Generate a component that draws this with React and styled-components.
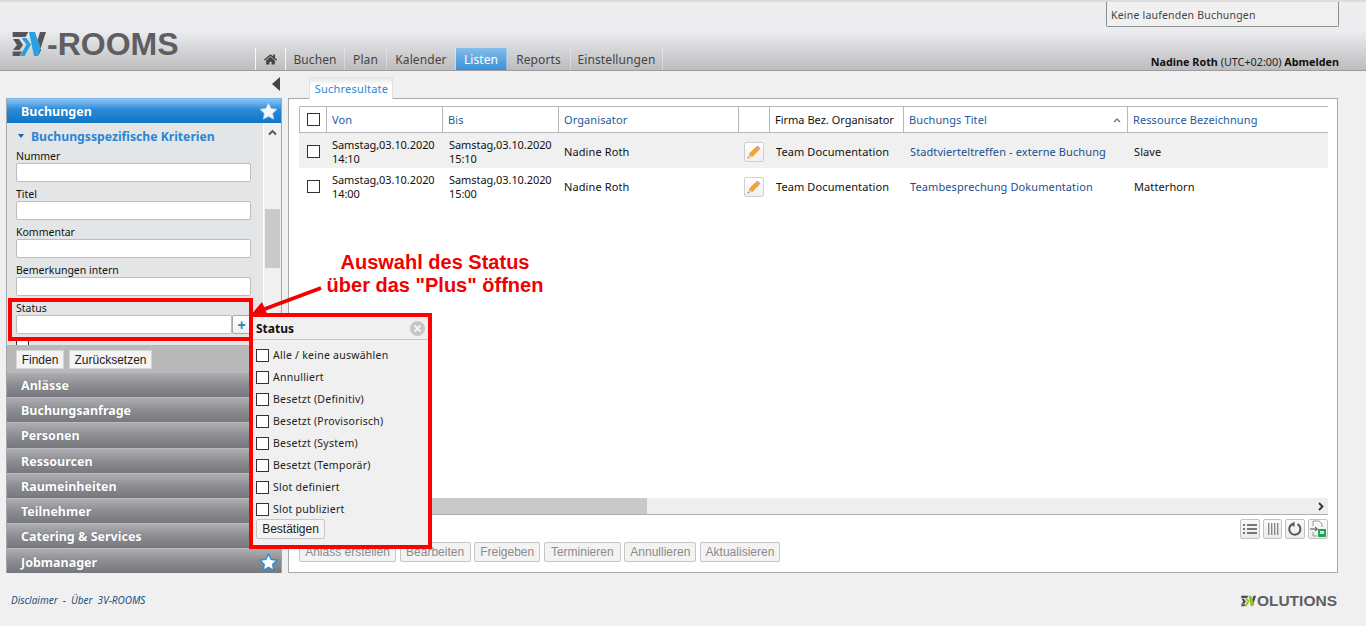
import React from 'react';
import styled, { createGlobalStyle } from 'styled-components';
import { FaHome } from 'react-icons/fa';

const UI_FONT = '"Noto Sans", "Open Sans", sans-serif';
const ARIAL = '"Liberation Sans", Arial, sans-serif';

const Global = createGlobalStyle`
  html, body { margin: 0; padding: 0; background: #f0f0f0; }
  body { font-family: ${UI_FONT}; font-size: 11px; color: #111; }
  * { box-sizing: border-box; }
`;

const Page = styled.div`
  position: relative;
  width: 1366px;
  height: 626px;
  overflow: hidden;
  display: flex;
  flex-direction: column;
`;

/* kopfzeile */
const Header = styled.header`
  height: 71px;
  flex: none;
  display: flex;
  flex-direction: column;
  border-top: 2px solid #dcdcdc;
  border-bottom: 1px solid #9b9ba0;
  background: linear-gradient(to bottom, #eeeef0 0%, #ecedef 42%, #bcbcbf 100%);
`;

const HeaderTop = styled.div`
  height: 25px;
  flex: none;
  display: flex;
  justify-content: flex-end;
  padding-right: 27px;
`;

const RunningBox = styled.div`
  width: 233px;
  height: 25px;
  padding: 6px 0 0 4px;
  background: #f0f0f0;
  border: 1px solid #8f8f8f;
  border-top: 0;
  border-radius: 0 0 2px 2px;
  color: #444;
  font-size: 10.5px;
  letter-spacing: 0.2px;
`;

const HeaderBottom = styled.div`
  flex: 1;
  display: flex;
  align-items: flex-end;
  padding-right: 27px;
`;

const LogoWrap = styled.div`
  width: 255px;
  flex: none;
  align-self: flex-start;
  display: flex;
  align-items: center;
  padding: 1px 0 0 12px;
`;

const LogoText = styled.span`
  font-family: ${ARIAL};
  font-weight: 700;
  font-size: ${p => p.$size}px;
  line-height: 1;
  color: #5e5e63;
  letter-spacing: ${p => p.$spacing || 0}px;
`;

const Nav = styled.nav`
  display: flex;
  height: 22px;
  border-left: 1px solid #f6f6f6;
`;

const NavItem = styled.div`
  width: ${p => p.$w}px;
  display: flex;
  align-items: center;
  justify-content: center;
  font-size: 12px;
  letter-spacing: 0.1px;
  color: ${p => (p.$active ? '#fff' : '#454545')};
  background: ${p => (p.$active ? 'linear-gradient(to bottom, #84bde9, #3a90d8)' : 'transparent')};
  border-right: 1px solid ${p => (p.$white ? '#f6f6f6' : 'rgba(255,255,255,0.35)')};
`;

const UserInfo = styled.div`
  margin-left: auto;
  padding-bottom: 1px;
  font-size: 10.8px;
  color: #222;
  b { color: #111; }
`;

/* inhalt */
const Content = styled.div`
  flex: none;
  display: grid;
  grid-template-columns: 276px 1050px;
  column-gap: 6px;
  padding-left: 6px;
`;

const SideColumn = styled.div`
  display: flex;
  flex-direction: column;
`;

const CollapseRow = styled.div`
  height: 27px;
  display: flex;
  justify-content: flex-end;
  padding: 6px 2px 0 0;
`;

const Sidebar = styled.aside`
  height: 475px;
  border: 1px solid #a6a6a9;
  border-top: 0;
  display: flex;
  flex-direction: column;
  background: #e4e5e7;
`;

const AccordionHead = styled.div`
  height: ${p => p.$h || 25}px;
  flex: none;
  display: flex;
  align-items: center;
  justify-content: space-between;
  padding: ${p => (p.$low ? 2 : 0)}px 3px 0 14px;
  color: #fff;
  font-size: 12.5px;
  font-weight: 700;
  text-shadow: 0 0 1px rgba(0, 0, 0, 0.25);
  border-top: 1px solid ${p => (p.$blue ? '#7ab6ec' : '#b9babd')};
  background: ${p =>
    p.$blue
      ? 'linear-gradient(to bottom, #8cc4f3 0%, #2a8ad9 45%, #0f76c6 100%)'
      : 'linear-gradient(to bottom, #aeaeb2 0%, #8c8d92 50%, #77787e 100%)'};
`;

const SectionBody = styled.div`
  height: 222px;
  flex: none;
  display: flex;
  overflow: hidden;
`;

const FormArea = styled.div`
  flex: 1;
  padding: 0 0 0 9px;
`;

const SectionTitle = styled.div`
  height: 21px;
  padding-top: 5px;
  display: flex;
  align-items: center;
  gap: 7px;
  margin-left: 2px;
  color: #2a86d6;
  font-size: 12.2px;
  font-weight: 700;
`;

const Caret = styled.span`
  width: 0;
  height: 0;
  border-left: 3.5px solid transparent;
  border-right: 3.5px solid transparent;
  border-top: 4px solid #1668b4;
`;

const FieldLabel = styled.div`
  height: 19px;
  padding-top: 6px;
  font-size: 10.5px;
  line-height: 13px;
  color: #111;
`;

const InputRow = styled.div`
  display: flex;
  width: 235px;
  height: 19px;
`;

const TextField = styled.div`
  flex: 1;
  background: #fff;
  border: 1px solid #bdbdbd;
  border-radius: 2px;
`;

const PlusButton = styled.div`
  width: 19px;
  height: 19px;
  display: flex;
  align-items: center;
  justify-content: center;
  background: linear-gradient(to bottom, #fff, #efefef);
  border: 1px solid #a8a8a8;
  border-radius: 2px;
  color: #2f7dbd;
  font-family: ${ARIAL};
  font-weight: 700;
  font-size: 14px;
`;

const ClippedBox = styled.div`
  width: 13px;
  height: 13px;
  margin-top: 6px;
  background: #fff;
  border: 1px solid #333;
`;

const ScrollRail = styled.div`
  width: 18px;
  flex: none;
  background: #f0f0f0;
  border-left: 1px solid #fff;
  display: flex;
  flex-direction: column;
  align-items: center;
  padding-top: 5px;
  color: #555;
`;

const ScrollThumb = styled.div`
  width: 15px;
  height: 59px;
  margin-top: 72px;
  background: #c9c9c9;
`;

const ButtonBar = styled.div`
  height: 27px;
  flex: none;
  display: flex;
  align-items: flex-start;
  gap: 5px;
  padding: 5px 0 0 9px;
  background: #b9b9b9;
`;

const SmallButton = styled.div`
  height: 19px;
  width: ${p => p.$w}px;
  display: flex;
  align-items: center;
  justify-content: center;
  background: #f4f4f4;
  border: 1px solid #d6d6d6;
  font-family: ${ARIAL};
  font-size: 12px;
  color: #222;
`;

/* hauptbereich */
const MainColumn = styled.div`
  display: flex;
  flex-direction: column;
`;

const TabStrip = styled.div`
  height: 27px;
  display: flex;
  align-items: flex-end;
  padding-left: 21px;
`;

const Tab = styled.div`
  position: relative;
  z-index: 1;
  width: 84px;
  height: 22px;
  margin-bottom: -1px;
  padding-left: 1px;
  display: flex;
  align-items: center;
  justify-content: center;
  color: #2a86d6;
  font-size: 11px;
  letter-spacing: 0.2px;
  background: linear-gradient(to bottom, #e6e6e6, #fff 35%);
  border: 1px solid #e2e2e2;
  border-bottom: 0;
`;

const Panel = styled.section`
  height: 475px;
  display: flex;
  flex-direction: column;
  padding: 7px 9px 10px 10px;
  background: #fff;
  border: 1px solid #a9a9ac;
`;

const TableArea = styled.div`
  flex: 1;
  overflow: hidden;
`;

const Row = styled.div`
  display: grid;
  grid-template-columns: 28px 116px 116px 180px 31px 134px 224px 200px;
  height: ${p => (p.$head ? 27 : 35)}px;
  background: ${p => (p.$shade ? '#f0f0f0' : '#fff')};
  border-top: ${p => (p.$head ? '1px solid #b8b8bc' : '0')};
  border-bottom: ${p => (p.$head ? '1px solid #b8b8bc' : '0')};
`;

const HeadCell = styled.div`
  display: flex;
  align-items: center;
  justify-content: ${p => (p.$center ? 'center' : 'space-between')};
  padding: 0 ${p => (p.$center ? 0 : 6)}px 0 ${p => (p.$center ? 0 : 5)}px;
  border-left: ${p => (p.$first ? '1px solid #b8b8bc' : '0')};
  border-right: ${p => (p.$last ? '0' : '1px solid #b8b8bc')};
  color: ${p => (p.$plain ? '#111' : '#1b5a9a')};
  font-size: 11px;
  letter-spacing: ${p => (p.$plain ? 0 : 0.1)}px;
`;

const Cell = styled.div`
  display: flex;
  align-items: center;
  justify-content: ${p => (p.$center ? 'center' : 'flex-start')};
  padding-top: 2px;
  padding-left: ${p => (p.$center ? 0 : p.$pad || 6)}px;
  color: ${p => (p.$link ? '#1a4f8f' : '#111')};
  font-size: 11px;
  line-height: 14px;
  white-space: pre-line;
  letter-spacing: ${p => (p.$tight ? -0.07 : 0.1)}px;
`;

const Check = styled.span`
  display: block;
  width: 13px;
  height: 13px;
  flex: none;
  background: #fff;
  border: 1px solid #333;
`;

const PencilButton = styled.div`
  width: 20px;
  height: 20px;
  margin-right: 1px;
  display: flex;
  align-items: center;
  justify-content: center;
  background: linear-gradient(to bottom, #fff, #f0f0f0);
  border: 1px solid #cfcfcf;
  border-radius: 2px;
`;

const HScroll = styled.div`
  height: 17px;
  flex: none;
  display: flex;
  align-items: center;
  background: #eeeeee;
  border-bottom: 1px solid #b0b0b3;
`;

const HThumb = styled.div`
  width: 332px;
  height: 16px;
  margin-left: 16px;
  background: #c9c9c9;
`;

const HArrow = styled.div`
  margin-left: auto;
  padding-right: 3px;
  display: flex;
  align-items: center;
  color: #333;
`;

const ToolRow = styled.div`
  height: 20px;
  margin-top: 4px;
  flex: none;
  display: flex;
  justify-content: flex-end;
  gap: 3px;
`;

const ToolButton = styled.div`
  width: ${p => p.$w || 20}px;
  height: 20px;
  display: flex;
  align-items: center;
  justify-content: center;
  background: linear-gradient(to bottom, #fafafa, #ebebeb);
  border: 1px solid #c2c2c2;
  border-radius: 2px;
`;

const ActionRow = styled.div`
  height: 20px;
  margin-top: 3px;
  flex: none;
  display: flex;
  gap: 3.6px;
`;

const ActionButton = styled.div`
  height: 20px;
  width: ${p => p.$w}px;
  display: flex;
  align-items: center;
  justify-content: center;
  font-family: ${ARIAL};
  font-size: 12px;
  color: #8b8b8b;
  background: #f3f3f3;
  border: 1px solid #c6c6c6;
  border-radius: 2px;
`;

/* fusszeile */
const Footer = styled.footer`
  flex: 1;
  display: flex;
  align-items: center;
  justify-content: space-between;
  padding: 0 29px 0 11px;
`;

const FooterLinks = styled.div`
  font-size: 10px;
  font-style: italic;
  color: #1d4f82;
  word-spacing: 2.5px;
`;

const FooterLogo = styled.div`
  display: flex;
  align-items: center;
  padding-top: 2px;
`;

/* anmerkungen im screenshot, liegen ueber dem inhalt */
const RedFrame = styled.div`
  position: absolute;
  left: 8px;
  top: 298px;
  width: 245px;
  height: 43px;
  border: 4px solid #ff0000;
  pointer-events: none;
`;

const Popup = styled.div`
  position: absolute;
  left: 249px;
  top: 313px;
  width: 183px;
  height: 236px;
  display: flex;
  flex-direction: column;
  background: #f0f0f0;
  border: 4px solid #ff0000;
`;

const PopupHead = styled.div`
  height: 23px;
  flex: none;
  display: flex;
  align-items: center;
  justify-content: space-between;
  padding: 0 3px 0 3px;
  font-size: 12px;
  font-weight: 700;
  color: #111;
  border-bottom: 1px solid #c4c4c4;
`;

const CloseDot = styled.div`
  width: 15px;
  height: 15px;
  display: flex;
  align-items: center;
  justify-content: center;
  border-radius: 50%;
  background: #c6c6c6;
`;

const PopupList = styled.div`
  padding: 4px 0 0 3px;
  display: flex;
  flex-direction: column;
`;

const PopupRow = styled.div`
  height: 22px;
  display: flex;
  align-items: center;
  gap: 4px;
  font-size: 10.5px;
  letter-spacing: 0.25px;
  color: #222;
`;

const ConfirmButton = styled.div`
  width: 69px;
  height: 20px;
  margin: -1px 0 0 3px;
  display: flex;
  align-items: center;
  justify-content: center;
  font-family: ${ARIAL};
  font-size: 12px;
  color: #222;
  background: #f4f4f4;
  border: 1px solid #c6c6c6;
  border-radius: 2px;
`;

const Note = styled.div`
  position: absolute;
  left: 301px;
  top: 251px;
  width: 268px;
  text-align: center;
  font-family: ${ARIAL};
  font-weight: 700;
  font-size: 20px;
  line-height: 23px;
  color: #f00000;
`;

const ArrowSvg = styled.svg`
  position: absolute;
  left: 240px;
  top: 280px;
`;

const Star = ({ blue }) => (
  <svg width="19" height="19" viewBox="0 0 18 18">
    <polygon
      points="9,1 11.47,6.1 17.08,6.87 13,10.8 14,16.38 9,13.7 4,16.38 5,10.8 0.92,6.87 6.53,6.1"
      fill={blue ? '#fff' : '#f4f8fd'}
      stroke={blue ? '#2a8ad9' : '#9fc9ee'}
      strokeWidth={blue ? 1.3 : 0.7}
      strokeLinejoin="round"
    />
  </svg>
);

const Chevron = ({ up }) => (
  <svg width="9" height="9" viewBox="0 0 9 9">
    <path d={up ? 'M1 6.5 L4.5 3 L8 6.5' : 'M3 1 L6.5 4.5 L3 8'} fill="none" stroke="currentColor" strokeWidth="1.8" />
  </svg>
);

const Pencil = () => (
  <svg width="16" height="16" viewBox="0 0 16 16">
    <polygon points="3,10 10,3 13,6 6,13" fill="#f3a531" stroke="#d98a1c" strokeWidth="0.4" />
    <polygon points="3,10 6,13 1.6,14.4" fill="#e9cfa5" />
    <polygon points="1.6,14.4 3,13.9 2.1,13" fill="#444" />
    <polygon points="10,3 11.5,1.5 14.5,4.5 13,6" fill="#e58fb0" />
  </svg>
);

const RoomsMark = () => (
  <svg width="36" height="24" viewBox="0 0 36 24" style={{ marginRight: -1 }}>
    <polygon points="0.7,0 16.3,0 13.5,5 0.7,5" fill="#55555a" />
    <polygon points="1,7 7,7 11,13 7.5,18 1,18 5,13" fill="#55555a" />
    <polygon points="0.7,19.5 10,19.5 7.5,24 0.7,24" fill="#55555a" />
    <polygon points="9.5,6 14.5,6 19,12.5 12.5,24 8,24 14.5,12.5" fill="#2b9fe3" />
    <polygon points="17,0 23,0 29,18 26,24 22,24" fill="#2b9fe3" />
    <polygon points="26,24 34,0 28,0 25.6,8 29,18" fill="#55555a" />
  </svg>
);

const VolutionsMark = () => (
  <svg width="16" height="12" viewBox="0 0 36 24">
    <polygon points="0.7,0 16.3,0 13.5,5 0.7,5" fill="#4a4a4a" />
    <polygon points="1,7 7,7 11,13 7.5,18 1,18 5,13" fill="#4a4a4a" />
    <polygon points="0.7,19.5 10,19.5 7.5,24 0.7,24" fill="#4a4a4a" />
    <polygon points="9.5,6 14.5,6 19,12.5 12.5,24 8,24 14.5,12.5" fill="#8cc21f" />
    <polygon points="17,0 23,0 29,18 26,24 22,24" fill="#8cc21f" />
    <polygon points="26,24 34,0 28,0 25.6,8 29,18" fill="#4a4a4a" />
  </svg>
);

const ListIcon = () => (
  <svg width="16" height="14" viewBox="0 0 16 14" fill="#777">
    <rect x="1" y="2" width="2" height="2" />
    <rect x="5" y="2" width="10" height="2" />
    <rect x="1" y="6" width="2" height="2" />
    <rect x="5" y="6" width="10" height="2" />
    <rect x="1" y="10" width="2" height="2" />
    <rect x="5" y="10" width="10" height="2" />
  </svg>
);

const ColumnsIcon = () => (
  <svg width="12" height="14" viewBox="0 0 12 14" fill="#888">
    <rect x="1" y="1" width="1.4" height="12" />
    <rect x="4" y="1" width="1.4" height="12" />
    <rect x="7" y="1" width="1.4" height="12" />
    <rect x="10" y="1" width="1.4" height="12" />
  </svg>
);

const RefreshIcon = () => (
  <svg width="16" height="16" viewBox="0 0 16 16">
    <path d="M10.5 3.2 A5.6 5.6 0 1 1 4.8 3.4" fill="none" stroke="#555" strokeWidth="2" />
    <polygon points="7.5,0.5 7.5,6 3.5,3.2" fill="#555" />
  </svg>
);

const ExportIcon = () => (
  <svg width="18" height="18" viewBox="0 0 18 18">
    <path d="M4 1 H10 L13 4 V7 M4 1 V6 M4 12 V16 H8" fill="none" stroke="#999" strokeWidth="1" />
    <path d="M1 9 H8 M6 7 L8.5 9 L6 11" fill="none" stroke="#444" strokeWidth="1" />
    <rect x="9" y="9" width="8" height="8" fill="#23a455" />
    <rect x="11" y="11" width="4" height="3" fill="#cfeeda" />
  </svg>
);

const navItems = [
  { label: 'Buchen', w: 59 },
  { label: 'Plan', w: 42 },
  { label: 'Kalender', w: 69 },
  { label: 'Listen', w: 51, active: true },
  { label: 'Reports', w: 64 },
  { label: 'Einstellungen', w: 92 },
];

const fields = ['Nummer', 'Titel', 'Kommentar', 'Bemerkungen intern'];

// die Zeilenhoehen sind im Original nicht ganz gleich
const sections = [
  { name: 'Anlässe', h: 25 },
  { name: 'Buchungsanfrage', h: 25 },
  { name: 'Personen', h: 26 },
  { name: 'Ressourcen', h: 25 },
  { name: 'Raumeinheiten', h: 25 },
  { name: 'Teilnehmer', h: 25 },
  { name: 'Catering & Services', h: 25 },
];

const rows = [
  { von: 'Samstag,03.10.2020\n14:10', bis: 'Samstag,03.10.2020\n15:10', titel: 'Stadtvierteltreffen - externe Buchung', ressource: 'Slave', shade: true },
  { von: 'Samstag,03.10.2020\n14:00', bis: 'Samstag,03.10.2020\n15:00', titel: 'Teambesprechung Dokumentation', ressource: 'Matterhorn' },
];

const actions = [
  { label: 'Anlass erstellen', w: 97 },
  { label: 'Bearbeiten', w: 71 },
  { label: 'Freigeben', w: 66 },
  { label: 'Terminieren', w: 77 },
  { label: 'Annullieren', w: 72 },
  { label: 'Aktualisieren', w: 80 },
];

const statusList = [
  'Alle / keine auswählen',
  'Annulliert',
  'Besetzt (Definitiv)',
  'Besetzt (Provisorisch)',
  'Besetzt (System)',
  'Besetzt (Temporär)',
  'Slot definiert',
  'Slot publiziert',
];

const App = () => (
  <Page>
    <Global />
    <Header>
      <HeaderTop>
        <RunningBox>Keine laufenden Buchungen</RunningBox>
      </HeaderTop>
      <HeaderBottom>
        <LogoWrap>
          <RoomsMark />
          <LogoText $size={32}>-ROOMS</LogoText>
        </LogoWrap>
        <Nav>
          <NavItem $w={30} $white>
            <FaHome size={13} color="#444" />
          </NavItem>
          {navItems.map(item => (
            <NavItem key={item.label} $w={item.w} $active={item.active}>{item.label}</NavItem>
          ))}
        </Nav>
        <UserInfo>
          <b>Nadine Roth</b> (UTC+02:00) <b>Abmelden</b>
        </UserInfo>
      </HeaderBottom>
    </Header>

    <Content>
      <SideColumn>
        <CollapseRow>
          <svg width="8" height="14" viewBox="0 0 8 14">
            <polygon points="8,0 8,14 0,7" fill="#444" />
          </svg>
        </CollapseRow>
        <Sidebar>
          <AccordionHead $blue>
            Buchungen
            <Star />
          </AccordionHead>
          <SectionBody>
            <FormArea>
              <SectionTitle>
                <Caret />
                Buchungsspezifische Kriterien
              </SectionTitle>
              {fields.map(name => (
                <div key={name}>
                  <FieldLabel>{name}</FieldLabel>
                  <InputRow><TextField /></InputRow>
                </div>
              ))}
              <FieldLabel>Status</FieldLabel>
              <InputRow>
                <TextField />
                <PlusButton>+</PlusButton>
              </InputRow>
              <ClippedBox />
            </FormArea>
            <ScrollRail>
              <Chevron up />
              <ScrollThumb />
            </ScrollRail>
          </SectionBody>
          <ButtonBar>
            <SmallButton $w={48}>Finden</SmallButton>
            <SmallButton $w={83}>Zurücksetzen</SmallButton>
          </ButtonBar>
          {sections.map(item => (
            <AccordionHead key={item.name} $h={item.h}>{item.name}</AccordionHead>
          ))}
          <AccordionHead $h={25} $low>
            Jobmanager
            <Star blue />
          </AccordionHead>
        </Sidebar>
      </SideColumn>

      <MainColumn>
        <TabStrip>
          <Tab>Suchresultate</Tab>
        </TabStrip>
        <Panel>
          <TableArea>
            <Row $head>
              <HeadCell $center $first><Check /></HeadCell>
              <HeadCell>Von</HeadCell>
              <HeadCell>Bis</HeadCell>
              <HeadCell>Organisator</HeadCell>
              <HeadCell />
              <HeadCell $plain>Firma Bez. Organisator</HeadCell>
              <HeadCell>
                Buchungs Titel
                <svg width="8" height="6" viewBox="0 0 8 6">
                  <path d="M1 5 L4 2 L7 5" fill="none" stroke="#777" strokeWidth="1.4" />
                </svg>
              </HeadCell>
              <HeadCell $last>Ressource Bezeichnung</HeadCell>
            </Row>
            {rows.map(row => (
              <Row key={row.von} $shade={row.shade}>
                <Cell $center><Check /></Cell>
                <Cell $pad={5} $tight>{row.von}</Cell>
                <Cell $pad={6} $tight>{row.bis}</Cell>
                <Cell $pad={5}>Nadine Roth</Cell>
                <Cell $center><PencilButton><Pencil /></PencilButton></Cell>
                <Cell $pad={6}>Team Documentation</Cell>
                <Cell $link>{row.titel}</Cell>
                <Cell>{row.ressource}</Cell>
              </Row>
            ))}
          </TableArea>
          <HScroll>
            <HThumb />
            <HArrow><Chevron /></HArrow>
          </HScroll>
          <ToolRow>
            <ToolButton><ListIcon /></ToolButton>
            <ToolButton $w={19}><ColumnsIcon /></ToolButton>
            <ToolButton><RefreshIcon /></ToolButton>
            <ToolButton><ExportIcon /></ToolButton>
          </ToolRow>
          <ActionRow>
            {actions.map(action => (
              <ActionButton key={action.label} $w={action.w}>{action.label}</ActionButton>
            ))}
          </ActionRow>
        </Panel>
      </MainColumn>
    </Content>

    <Footer>
      <FooterLinks>Disclaimer - Über 3V-ROOMS</FooterLinks>
      <FooterLogo>
        <VolutionsMark />
        <LogoText $size={15.5}>OLUTIONS</LogoText>
      </FooterLogo>
    </Footer>

    <RedFrame />
    <Note>
      Auswahl des Status
      <br />
      über das "Plus" öffnen
    </Note>
    <ArrowSvg width="90" height="45" viewBox="0 0 90 45">
      <line x1="81" y1="8" x2="22" y2="30" stroke="#f00000" strokeWidth="3.5" />
      <polygon points="9,37 22,22 28,36" fill="#f00000" />
    </ArrowSvg>
    <Popup>
      <PopupHead>
        Status
        <CloseDot>
          <svg width="9" height="9" viewBox="0 0 9 9">
            <path d="M1.5 1.5 L7.5 7.5 M7.5 1.5 L1.5 7.5" stroke="#f4f4f4" strokeWidth="2" />
          </svg>
        </CloseDot>
      </PopupHead>
      <PopupList>
        {statusList.map(name => (
          <PopupRow key={name}>
            <Check />
            {name}
          </PopupRow>
        ))}
      </PopupList>
      <ConfirmButton>Bestätigen</ConfirmButton>
    </Popup>
  </Page>
);

export default App;
